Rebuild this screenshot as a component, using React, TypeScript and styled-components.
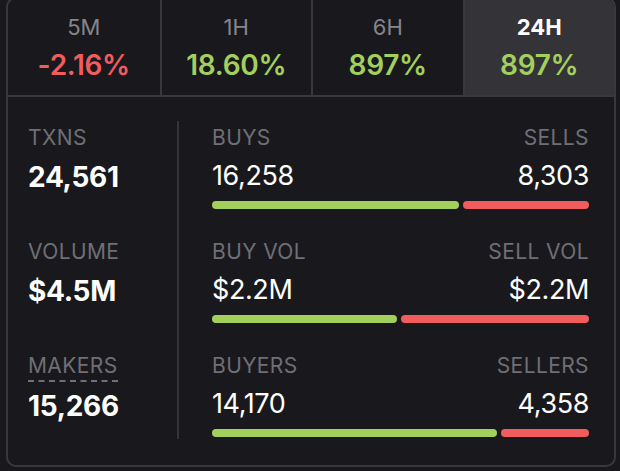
import React from "react";
import styled, { createGlobalStyle } from "styled-components";

const GlobalStyle = createGlobalStyle`
  html, body {
    margin: 0;
    padding: 0;
    background: #19191d;
    overflow: hidden;
  }
  body {
    font-family: Inter, "Noto Sans", sans-serif;
  }
`;

const tabs = [
  { label: "5M", value: "-2.16%", up: false },
  { label: "1H", value: "18.60%", up: true },
  { label: "6H", value: "897%", up: true },
  { label: "24H", value: "897%", up: true, active: true },
];

const stats = [
  { label: "TXNS", value: "24,561" },
  { label: "VOLUME", value: "$4.5M" },
  { label: "MAKERS", value: "15,266", dashed: true },
];

const splits = [
  { left: "BUYS", right: "SELLS", lv: "16,258", rv: "8,303", lw: 16258, rw: 8303 },
  { left: "BUY VOL", right: "SELL VOL", lv: "$2.2M", rv: "$2.2M", lw: 1, rw: 1.02 },
  { left: "BUYERS", right: "SELLERS", lv: "14,170", rv: "4,358", lw: 14170, rw: 4358 },
];

function App() {
  return (
    <>
      <GlobalStyle />
      <Card>
        <TabRow>
          {tabs.map((t) => (
            <Tab key={t.label} $active={!!t.active}>
              <TabLabel $active={!!t.active}>{t.label}</TabLabel>
              <TabValue $up={t.up}>{t.value}</TabValue>
            </Tab>
          ))}
        </TabRow>
        <Body>
          <StatColumn>
            {stats.map((s) => (
              <Cell key={s.label}>
                <Label $dashed={!!s.dashed}>{s.label}</Label>
                <BigValue>{s.value}</BigValue>
              </Cell>
            ))}
          </StatColumn>
          <Divider />
          <SplitColumn>
            {splits.map((s) => (
              <Cell key={s.left}>
                <SplitHead>
                  <Label>{s.left}</Label>
                  <Label>{s.right}</Label>
                </SplitHead>
                <SplitHead>
                  <Value>{s.lv}</Value>
                  <Value>{s.rv}</Value>
                </SplitHead>
                <Bars>
                  <Bar $color="#a3d05d" style={{ flexGrow: s.lw }} />
                  <Bar $color="#f25c5c" style={{ flexGrow: s.rw }} />
                </Bars>
              </Cell>
            ))}
          </SplitColumn>
        </Body>
      </Card>
    </>
  );
}

const Card = styled.div`
  box-sizing: border-box;
  width: 610px;
  height: 470px;
  margin: -3px 0 0 6px;
  border: 2px solid #38383d;
  border-radius: 10px;
  background: #19191d;
  overflow: hidden;
  display: flex;
  flex-direction: column;
`;

const TabRow = styled.div`
  display: grid;
  grid-template-columns: repeat(4, 1fr);
  height: 101px;
  border-bottom: 2px solid #38383d;
  box-sizing: border-box;
`;

const Tab = styled.div<{ $active: boolean }>`
  display: flex;
  flex-direction: column;
  align-items: center;
  justify-content: center;
  gap: 9px;
  background: ${(p) => (p.$active ? "#333338" : "transparent")};
  & + & {
    border-left: 2px solid #38383d;
  }
`;

const TabLabel = styled.div<{ $active: boolean }>`
  font-size: 22px;
  line-height: 26px;
  font-weight: ${(p) => (p.$active ? 700 : 400)};
  color: ${(p) => (p.$active ? "#ffffff" : "#85858b")};
`;

const TabValue = styled.div<{ $up: boolean }>`
  font-size: 28px;
  line-height: 32px;
  font-weight: 600;
  letter-spacing: -0.3px;
  color: ${(p) => (p.$up ? "#a3d05d" : "#f25c5c")};
`;

const Body = styled.div`
  display: grid;
  grid-template-columns: 149px 2px 1fr;
  padding: 26px 25px 0 20px;
  flex: 1;
`;

const StatColumn = styled.div`
  display: flex;
  flex-direction: column;
`;

const SplitColumn = styled.div`
  display: flex;
  flex-direction: column;
  padding-left: 33px;
`;

const Divider = styled.div`
  width: 2px;
  height: 318px;
  margin-top: -2px;
  background: #333338;
`;

const Cell = styled.div`
  height: 114px;
  display: flex;
  flex-direction: column;
`;

const Label = styled.div<{ $dashed?: boolean }>`
  align-self: flex-start;
  font-size: 21px;
  line-height: 30px;
  font-weight: 400;
  color: #6f6f75;
  letter-spacing: 0.4px;
  ${(p) =>
    p.$dashed &&
    `
    padding-bottom: 1px;
    border-bottom: 2px dashed #6f6f75;
    line-height: 26px;
    margin-top: 2px;
  `}

  & + & {
    align-self: auto;
  }
`;

const BigValue = styled.div`
  font-size: 28px;
  line-height: 36px;
  font-weight: 700;
  color: #ffffff;
  letter-spacing: -0.3px;
  margin-top: 6px;
`;

const SplitHead = styled.div`
  display: flex;
  justify-content: space-between;
`;

const Value = styled.div`
  font-size: 27px;
  line-height: 36px;
  font-weight: 400;
  color: #ffffff;
  letter-spacing: -0.4px;
  margin-top: 5px;
`;

const Bars = styled.div`
  display: flex;
  gap: 4px;
  margin-top: 7px;
`;

const Bar = styled.div<{ $color: string }>`
  height: 8px;
  border-radius: 4px;
  flex-basis: 0;
  background: ${(p) => p.$color};
`;

export default App;
